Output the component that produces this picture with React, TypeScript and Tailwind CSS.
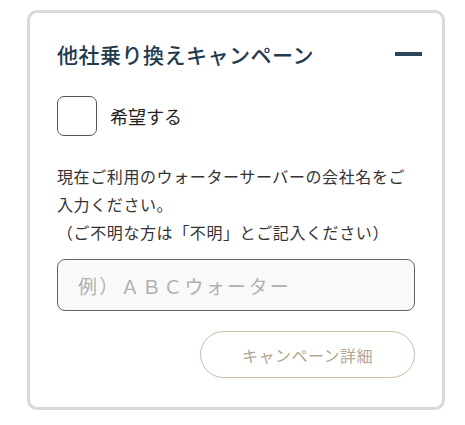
import { useState } from "react";

export default function App() {
  const [open, setOpen] = useState(true);
  const [checked, setChecked] = useState(false);

  return (
    <div className="min-h-screen bg-white pt-[10px] pl-[27px] font-['Noto_Sans_CJK_JP','Noto_Sans',sans-serif]">
      <div className="w-[418px] h-[400px] rounded-[10px] border-[3px] border-[#d9d9d9] bg-white px-[27px] pt-[25px]">
        <div className="flex items-center justify-between">
          <h2 className="text-[21px] leading-[32px] font-medium tracking-[0.5px] text-[#223a4e]">
            他社乗り換えキャンペーン
          </h2>
          <button
            onClick={() => setOpen(!open)}
            className="mr-[-7px] flex h-[32px] w-[27px] items-center justify-center"
            aria-label="toggle"
          >
            <span className="block h-[4px] w-[27px] bg-[#2a4658]" />
          </button>
        </div>

        {open && (
          <>
            <label className="mt-[26px] flex items-center gap-[13px] cursor-pointer">
              <input
                type="checkbox"
                checked={checked}
                onChange={() => setChecked(!checked)}
                className="h-[40px] w-[40px] appearance-none rounded-[7px] border border-[#555] bg-white"
              />
              <span className="text-[18px] font-normal text-[#222]">希望する</span>
            </label>

            <p className="mt-[26px] text-[16px] leading-[28px] tracking-[0.6px] text-[#333]">
              現在ご利用のウォーターサーバーの会社名をご入力ください。
              <br />
              （ご不明な方は「不明」とご記入ください）
            </p>

            <input
              type="text"
              placeholder="例）ＡＢＣウォーター"
              className="mt-[13px] h-[52px] w-full rounded-[8px] border border-[#666] bg-[#f9f9f9] px-[20px] text-[19px] tracking-[2.3px] text-[#333] placeholder:text-[#b0b0b0] outline-none"
            />

            <div className="mt-[20px] flex justify-end">
              <button className="h-[47px] w-[215px] rounded-full border border-[#c9bba7] text-[16px] tracking-[0.5px] text-[#b3a58f]">
                キャンペーン詳細
              </button>
            </div>
          </>
        )}
      </div>
    </div>
  );
}
